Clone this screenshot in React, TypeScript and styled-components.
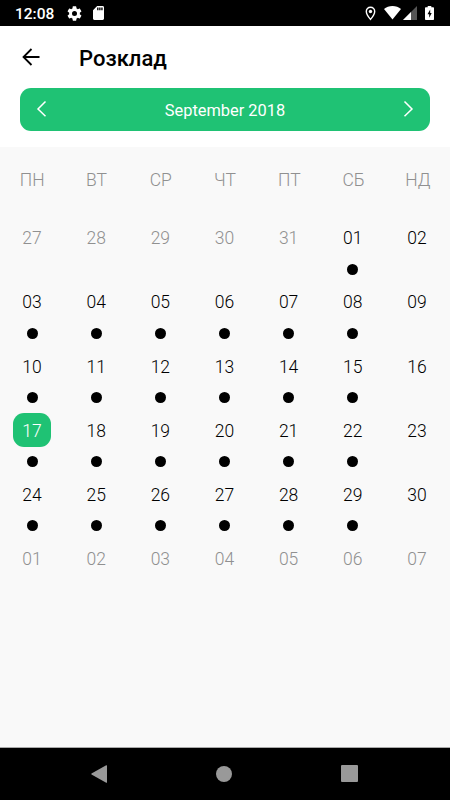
import React from "react";
import styled, { createGlobalStyle } from "styled-components";

const GlobalStyle = createGlobalStyle`
  * { box-sizing: border-box; }
  body { margin: 0; background: #f9f9f9; font-family: Roboto, sans-serif; }
`;

const Screen = styled.div`
  width: 450px;
  height: 800px;
  display: flex;
  flex-direction: column;
  overflow: hidden;
  background: #f9f9f9;
`;

const StatusBar = styled.div`
  height: 26px;
  flex: none;
  display: flex;
  align-items: center;
  justify-content: space-between;
  padding: 0 16px 0 15px;
  background: #000;
  color: #fff;
`;

const StatusGroup = styled.div<{ $gap?: number }>`
  display: flex;
  align-items: center;
  gap: ${(p) => p.$gap ?? 0}px;
  svg { display: block; }
`;

const Clock = styled.span`
  width: 41px;
  font-size: 15.5px;
  font-weight: 500;
  line-height: 20px;
  padding-top: 2px;
`;

const Header = styled.header`
  height: 121px;
  flex: none;
  background: #fff;
  padding: 0 20px;
`;

const TitleRow = styled.div`
  height: 61.5px;
  display: flex;
  align-items: center;
  svg { display: block; }
`;

const BackButton = styled.button`
  width: 59px;
  height: 40px;
  padding: 0 0 0 0.5px;
  border: 0;
  background: none;
  display: flex;
  align-items: center;
`;

const Title = styled.h1`
  margin: 4px 0 0;
  font-size: 22px;
  font-weight: 500;
  line-height: 28px;
  color: #000;
`;

const MonthBar = styled.div`
  height: 43.5px;
  display: flex;
  align-items: center;
  justify-content: space-between;
  padding: 0 16px;
  border-radius: 11px;
  background: #1fc274;
  color: #fff;
`;

const MonthName = styled.span`
  font-size: 16.4px;
  line-height: 22px;
  padding-top: 3px;
`;

const MonthButton = styled.button`
  width: 12px;
  height: 20px;
  padding: 0;
  border: 0;
  background: none;
  svg { display: block; }
`;

const Calendar = styled.main`
  flex: 1;
  width: 449px;
`;

const WeekdayRow = styled.div`
  display: grid;
  grid-template-columns: repeat(7, 64.3px);
  height: 73.5px;
  padding-top: 21.5px;
`;

const Weekday = styled.span`
  text-align: center;
  font-size: 17.5px;
  font-weight: 300;
  line-height: 22px;
  color: #909090;
`;

const Days = styled.div`
  display: grid;
  grid-template-columns: repeat(7, 1fr);
  grid-auto-rows: 64.15px;
`;

const Day = styled.div`
  display: flex;
  flex-direction: column;
  align-items: center;
`;

const DayNumber = styled.span<{ $muted: boolean; $selected: boolean }>`
  width: 37.5px;
  height: 34.5px;
  display: flex;
  align-items: center;
  justify-content: center;
  padding-top: 1px;
  border-radius: 11px;
  font-size: 17.5px;
  font-weight: 300;
  color: ${(p) => (p.$selected ? "#fff" : p.$muted ? "#909090" : "#000")};
  background: ${(p) => (p.$selected ? "#1fc274" : "transparent")};
`;

const Dot = styled.span`
  width: 11px;
  height: 11px;
  margin-top: 8.8px;
  border-radius: 50%;
  background: #000;
`;

const NavBar = styled.nav`
  height: 53px;
  flex: none;
  display: flex;
  align-items: center;
  justify-content: space-between;
  padding: 0 92px 1px 91px;
  border-top: 1px solid #a9a9a9;
  background: #000;
  svg { display: block; }
`;

const weekdays = ["ПН", "ВТ", "СР", "ЧТ", "ПТ", "СБ", "НД"];

const pad = (n: number) => String(n).padStart(2, "0");

const days = Array.from({ length: 42 }, (_, i) => {
  const offset = i - 4;
  const muted = offset < 1 || offset > 30;
  const value = offset < 1 ? offset + 31 : offset > 30 ? offset - 30 : offset;
  return {
    label: pad(value),
    muted,
    selected: offset === 17,
    busy: !muted && i % 7 !== 6,
  };
});

const GearIcon = () => (
  <svg width="15" height="15" viewBox="1.5 1.5 21 21" fill="#fff">
    <path d="M19.43 12.98c.04-.32.07-.64.07-.98s-.03-.66-.07-.98l2.11-1.65c.19-.15.24-.42.12-.64l-2-3.46c-.12-.22-.39-.3-.61-.22l-2.49 1c-.52-.4-1.08-.73-1.69-.98l-.38-2.65A.49.49 0 0 0 14 2h-4c-.25 0-.46.18-.49.42l-.38 2.65c-.61.25-1.17.59-1.69.98l-2.49-1c-.23-.09-.49 0-.61.22l-2 3.46c-.13.22-.07.49.12.64l2.11 1.65c-.04.32-.07.65-.07.98s.03.66.07.98l-2.11 1.65c-.19.15-.24.42-.12.64l2 3.46c.12.22.39.3.61.22l2.49-1c.52.4 1.08.73 1.69.98l.38 2.65c.03.24.24.42.49.42h4c.25 0 .46-.18.49-.42l.38-2.65c.61-.25 1.17-.59 1.69-.98l2.49 1c.23.09.49 0 .61-.22l2-3.46c.12-.22.07-.49-.12-.64l-2.11-1.65zM12 15.5a3.5 3.5 0 1 1 0-7 3.5 3.5 0 0 1 0 7z" />
  </svg>
);

const SdCardIcon = () => (
  <svg width="11" height="14" viewBox="4 2 16 20" preserveAspectRatio="none" fill="#fff">
    <path d="M18 2h-8L4.02 8 4 20c0 1.1.9 2 2 2h12c1.1 0 2-.9 2-2V4c0-1.1-.9-2-2-2zm-6 6h-2V4h2v4zm3 0h-2V4h2v4zm3 0h-2V4h2v4z" />
  </svg>
);

const PinIcon = () => (
  <svg width="11" height="15" viewBox="0 0 11 15" fill="none">
    <path d="M5.5 1.2C3 1.2 1.3 3.1 1.3 5.4C1.3 8.4 5.5 13.4 5.5 13.4S9.7 8.4 9.7 5.4C9.7 3.1 8 1.2 5.5 1.2Z" stroke="#fff" strokeWidth="1.4" />
    <circle cx="5.5" cy="5.5" r="1.7" fill="#fff" />
  </svg>
);

const WifiIcon = () => (
  <svg width="17" height="14" viewBox="0 0 17 14" fill="#fff">
    <path d="M8.5 13.5L0 3C2.3 1.1 5.2 0 8.5 0S14.7 1.1 17 3Z" />
  </svg>
);

const SignalIcon = () => (
  <svg width="14" height="14" viewBox="0 0 14 14">
    <path d="M14 0V14H0Z" fill="#555" />
    <path d="M8 6V14H0Z" fill="#fff" />
  </svg>
);

const BatteryIcon = () => (
  <svg width="9" height="14" viewBox="0 0 9 14">
    <path d="M2.7 0H6.3V1.3H8.2Q9 1.3 9 2.1V13.2Q9 14 8.2 14H.8Q0 14 0 13.2V2.1Q0 1.3 .8 1.3H2.7Z" fill="#fff" />
    <path d="M5.2 3.5L2.5 8.3H4.2V11.7L6.7 6.9H5.2Z" fill="#000" />
  </svg>
);

const Chevron = ({ d }: { d: string }) => (
  <svg width="12" height="20" viewBox="0 0 12 20" fill="none">
    <path d={d} stroke="#fff" strokeWidth="1.5" />
  </svg>
);

export default function App() {
  return (
    <Screen>
      <GlobalStyle />
      <StatusBar>
        <StatusGroup $gap={11}>
          <Clock>12:08</Clock>
          <GearIcon />
          <SdCardIcon />
        </StatusGroup>
        <StatusGroup $gap={8}>
          <PinIcon />
          <StatusGroup $gap={2}>
            <WifiIcon />
            <SignalIcon />
          </StatusGroup>
          <BatteryIcon />
        </StatusGroup>
      </StatusBar>
      <Header>
        <TitleRow>
          <BackButton aria-label="Назад">
            <svg width="20" height="18" viewBox="0 0 20 18" fill="none" stroke="#000" strokeWidth="1.8">
              <path d="M18.5 9H2.5M10.5 1L2.5 9L10.5 17" />
            </svg>
          </BackButton>
          <Title>Розклад</Title>
        </TitleRow>
        <MonthBar>
          <MonthButton aria-label="Попередній місяць">
            <Chevron d="M9.5 2.5L2 10L9.5 17.2" />
          </MonthButton>
          <MonthName>September 2018</MonthName>
          <MonthButton aria-label="Наступний місяць">
            <Chevron d="M2.5 2.5L10 10L2.5 17.2" />
          </MonthButton>
        </MonthBar>
      </Header>
      <Calendar>
        <WeekdayRow>
          {weekdays.map((name) => (
            <Weekday key={name}>{name}</Weekday>
          ))}
        </WeekdayRow>
        <Days>
          {days.map((day, i) => (
            <Day key={i}>
              <DayNumber $muted={day.muted} $selected={day.selected}>
                {day.label}
              </DayNumber>
              {day.busy && <Dot />}
            </Day>
          ))}
        </Days>
      </Calendar>
      <NavBar>
        <svg width="16" height="18" viewBox="0 0 16 18" fill="#999">
          <path d="M15.2 .3Q16 0 16 .8V17.2Q16 18 15.2 17.7L.5 9.5Q0 9 .5 8.5Z" />
        </svg>
        <svg width="16" height="16" viewBox="0 0 16 16" fill="#999">
          <circle cx="8" cy="8" r="8" />
        </svg>
        <svg width="17" height="17" viewBox="0 0 17 17" fill="#999">
          <rect width="17" height="17" rx="1" />
        </svg>
      </NavBar>
    </Screen>
  );
}
